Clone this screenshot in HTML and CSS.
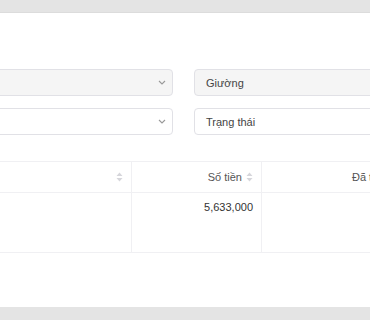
FILE: index.html
```html
<!DOCTYPE html>
<html lang="vi">
<head>
    <meta charset="UTF-8">
    <meta name="viewport" content="width=device-width, initial-scale=1.0">
    <title>Danh sách</title>
    <link rel="stylesheet" href="styles.css">
</head>
<body>

    <div class="panel">
        <div class="content">
            <div class="filters">
                <div class="select disabled">
                    <span class="chevron">
                        <svg width="8" height="5" viewBox="0 0 8 5"><path d="M1 1l3 3 3-3" fill="none" stroke="#999" stroke-width="1.1"/></svg>
                    </span>
                </div>
                <div class="field disabled">Giường</div>
                <div class="select">
                    <span class="chevron">
                        <svg width="8" height="5" viewBox="0 0 8 5"><path d="M1 1l3 3 3-3" fill="none" stroke="#999" stroke-width="1.1"/></svg>
                    </span>
                </div>
                <div class="field">Trạng thái</div>
            </div>

            <table class="grid">
                <thead>
                    <tr>
                        <th class="col-name">
                            <svg class="sort" width="7" height="10" viewBox="0 0 7 10"><path d="M3.5 0.5L6.5 4H0.5z M3.5 9.5L6.5 6H0.5z" fill="#d6d6db"/></svg>
                        </th>
                        <th class="col-money">Số tiền
                            <svg class="sort" width="7" height="10" viewBox="0 0 7 10"><path d="M3.5 0.5L6.5 4H0.5z M3.5 9.5L6.5 6H0.5z" fill="#d6d6db"/></svg>
                        </th>
                        <th class="col-paid">Đã trả</th>
                    </tr>
                </thead>
                <tbody>
                    <tr>
                        <td></td>
                        <td class="num">5,633,000</td>
                        <td></td>
                    </tr>
                </tbody>
            </table>
        </div>
    </div>

</body>
</html>
```

FILE: styles.css
```css
body {
    font-family: 'Liberation Sans', Arial, sans-serif;
    background-color: #e4e4e4;
    margin: 0;
    padding-top: 12px;
    overflow: hidden;
    height: 320px;
    box-sizing: border-box;
}
.panel {
    background-color: #fff;
    border-top: 1px solid #dcdcdc;
    height: 294px;
    overflow: hidden;
}
.content {
    margin-left: -40px;
    width: 640px;
    padding-top: 56px;
}
.filters {
    display: grid;
    grid-template-columns: 213px 240px;
    column-gap: 21px;
    row-gap: 12px;
}
.select,
.field {
    height: 27px;
    box-sizing: border-box;
    border: 1px solid #e1e1e6;
    border-radius: 4px;
    background-color: #fff;
    font-size: 11px;
    color: #444;
    display: flex;
    align-items: center;
    padding: 0 11px;
}
.select {
    justify-content: flex-end;
    padding-right: 6px;
}
.disabled {
    background-color: #f5f5f5;
}
.chevron {
    display: flex;
}
.grid {
    margin-top: 26px;
    border-collapse: collapse;
    table-layout: fixed;
    width: 560px;
    font-size: 11px;
}
.grid th,
.grid td {
    border: 1px solid #f0f0f3;
    padding: 0 8px;
}
.grid th {
    height: 30px;
    font-weight: normal;
    color: #555;
    text-align: right;
}
.grid td {
    height: 51px;
    vertical-align: top;
    padding-top: 8px;
    color: #333;
}
.col-name {
    width: 154px;
    border-left: none;
}
.col-money {
    width: 113px;
}
.grid th.col-paid {
    text-align: left;
    padding-left: 90px;
}
.num {
    text-align: right;
}
.sort {
    vertical-align: -1px;
    margin-left: 1px;
}
```
